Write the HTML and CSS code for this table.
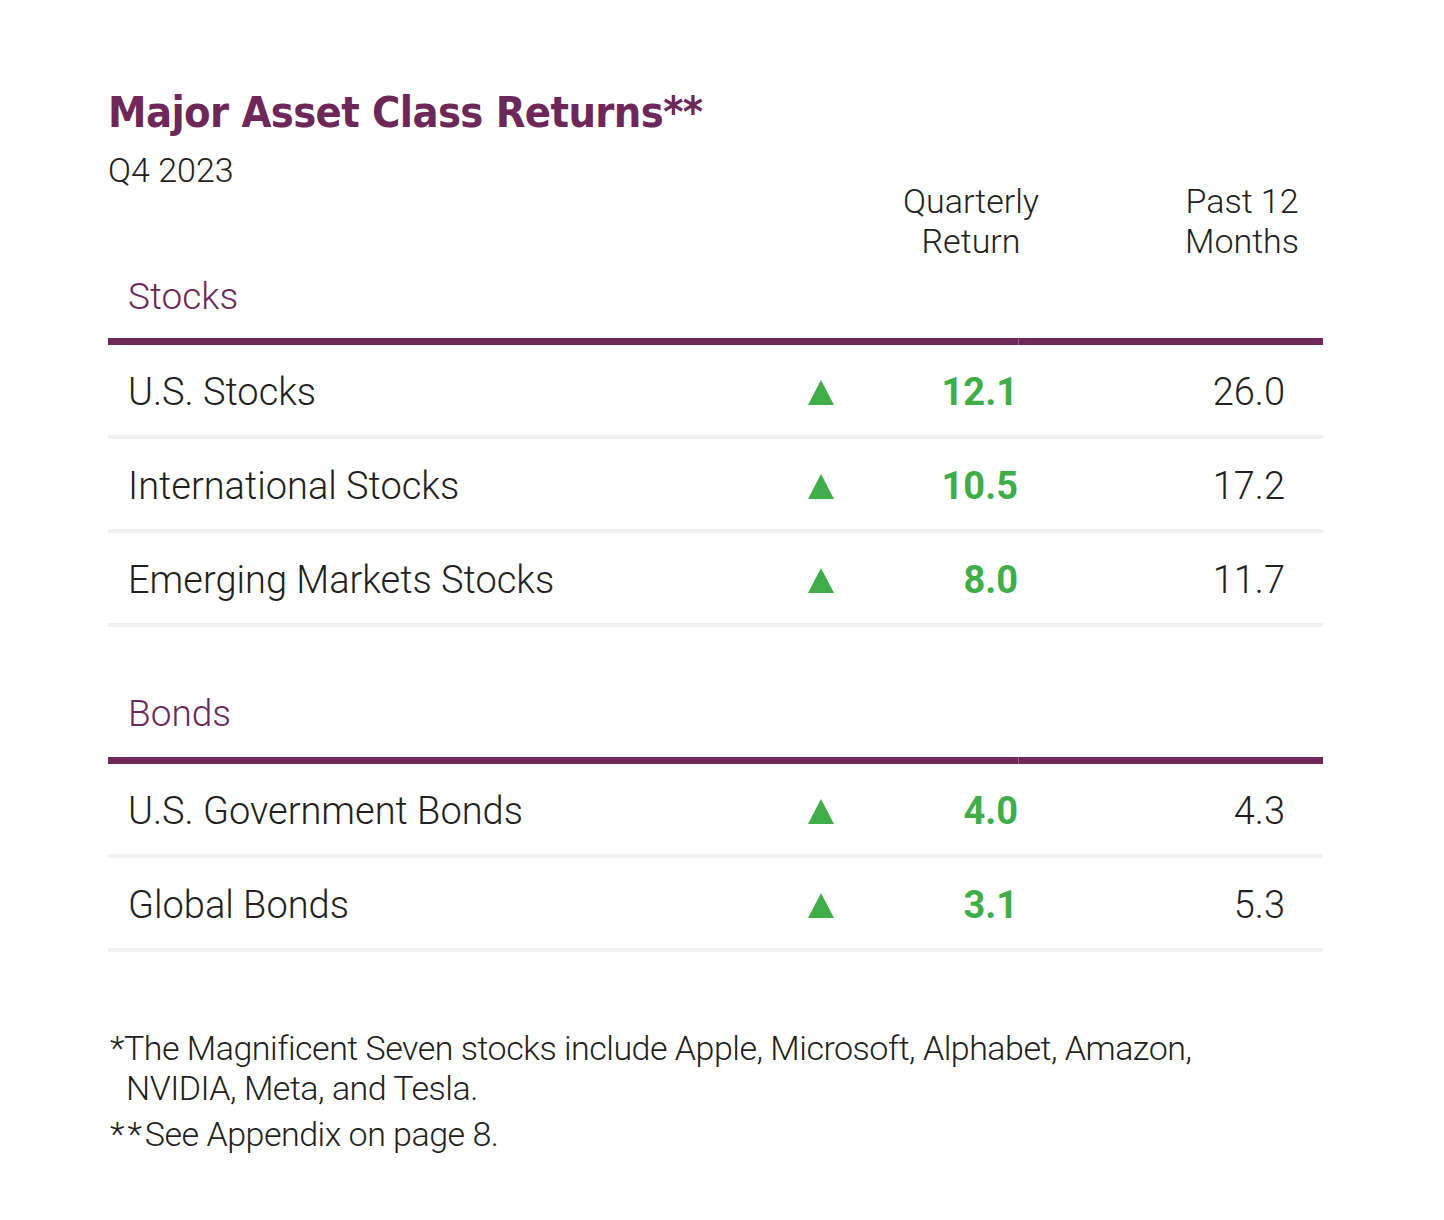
FILE: index.html
```html
<!DOCTYPE html>
<html lang="en">
<head>
<meta charset="utf-8">
<title>Major Asset Class Returns</title>
<link rel="stylesheet" href="styles.css">
</head>
<body>
<main class="page">
  <h1 class="title">Major Asset Class Returns**</h1>
  <div class="head">
    <div class="subtitle">Q4 2023</div>
    <div class="col-head col-q">Quarterly<br>Return</div>
    <div class="col-spacer"></div>
    <div class="col-head col-p">Past 12<br>Months</div>
  </div>

  <section class="group group-first">
    <h2 class="group-label">Stocks</h2>
    <div class="bar"><span class="bar-a"></span><span class="bar-b"></span></div>
    <div class="row">
      <div class="label">U.S. Stocks</div>
      <div class="tri"><svg width="26" height="25" viewBox="0 0 26 25"><polygon points="13,0 26,25 0,25" fill="#3fae49"/></svg></div>
      <div class="q">12.1</div>
      <div class="p">26.0</div>
    </div>
    <div class="row">
      <div class="label">International Stocks</div>
      <div class="tri"><svg width="26" height="25" viewBox="0 0 26 25"><polygon points="13,0 26,25 0,25" fill="#3fae49"/></svg></div>
      <div class="q">10.5</div>
      <div class="p">17.2</div>
    </div>
    <div class="row">
      <div class="label">Emerging Markets Stocks</div>
      <div class="tri"><svg width="26" height="25" viewBox="0 0 26 25"><polygon points="13,0 26,25 0,25" fill="#3fae49"/></svg></div>
      <div class="q">8.0</div>
      <div class="p">11.7</div>
    </div>
  </section>

  <section class="group group-second">
    <h2 class="group-label">Bonds</h2>
    <div class="bar"><span class="bar-a"></span><span class="bar-b"></span></div>
    <div class="row">
      <div class="label">U.S. Government Bonds</div>
      <div class="tri"><svg width="26" height="25" viewBox="0 0 26 25"><polygon points="13,0 26,25 0,25" fill="#3fae49"/></svg></div>
      <div class="q">4.0</div>
      <div class="p">4.3</div>
    </div>
    <div class="row">
      <div class="label">Global Bonds</div>
      <div class="tri"><svg width="26" height="25" viewBox="0 0 26 25"><polygon points="13,0 26,25 0,25" fill="#3fae49"/></svg></div>
      <div class="q">3.1</div>
      <div class="p">5.3</div>
    </div>
  </section>

  <div class="notes">
    <p class="note note-hang">*The Magnificent Seven stocks include Apple, Microsoft, Alphabet, Amazon,<br>NVIDIA, Meta, and Tesla.</p>
    <p class="note"><span class="stars">**</span>See Appendix on page 8.</p>
  </div>
</main>
</body>
</html>
```
FILE: styles.css
```css
* { box-sizing: border-box; }

html, body {
  margin: 0;
  padding: 0;
  background: #ffffff;
}

body {
  font-family: Roboto, "Liberation Sans", sans-serif;
  color: #231f20;
}

.page {
  width: 1323px;
  padding: 89px 0 0 108px;
}

.title {
  margin: 0;
  font-family: "DejaVu Sans Condensed", "Liberation Sans", sans-serif;
  font-weight: 700;
  font-size: 43px;
  line-height: 46px;
  color: #6e2759;
  letter-spacing: -0.6px;
}

.head {
  display: grid;
  grid-template-columns: 1fr 220px 80px 162px;
  margin-top: 15px;
  font-weight: 300;
  font-size: 34px;
  line-height: 40px;
}

.subtitle {
  align-self: start;
}

.col-head {
  padding-top: 31px;
  text-align: center;
}

.group-label {
  margin: 14px 0 19px 20px;
  font-weight: 300;
  font-size: 37px;
  line-height: 44px;
  color: #6e2759;
}

.group-second .group-label {
  margin-top: 65px;
  margin-bottom: 21px;
}

.bar {
  display: flex;
  gap: 1px;
  height: 7px;
  background: #94668a;
}

.bar-a {
  width: 910px;
  background: #6e2759;
}

.bar-b {
  flex: 1;
  background: #6e2759;
}

.row {
  display: grid;
  grid-template-columns: 1fr 50px 160px 305px;
  height: 94px;
  padding-top: 4px;
  border-bottom: 4px solid #f0f1f1;
  font-size: 38px;
  line-height: 86px;
  font-weight: 300;
}

.label {
  padding-left: 20px;
  white-space: nowrap;
}

.tri svg {
  vertical-align: baseline;
}

.q {
  text-align: right;
  padding-right: 0;
  font-weight: 700;
  color: #3fae49;
}

.p {
  text-align: right;
  padding-right: 38px;
}

.notes {
  margin-top: 76px;
  font-family: Roboto, "Liberation Sans", sans-serif;
  font-weight: 300;
  font-size: 34px;
  letter-spacing: -0.5px;
  color: #231f20;
}

.note {
  margin: 0;
  line-height: 40px;
  padding-left: 2px;
}

.stars {
  letter-spacing: 3px;
}

.note-hang {
  padding-left: 18px;
  text-indent: -16px;
  margin-bottom: 6px;
}
```
